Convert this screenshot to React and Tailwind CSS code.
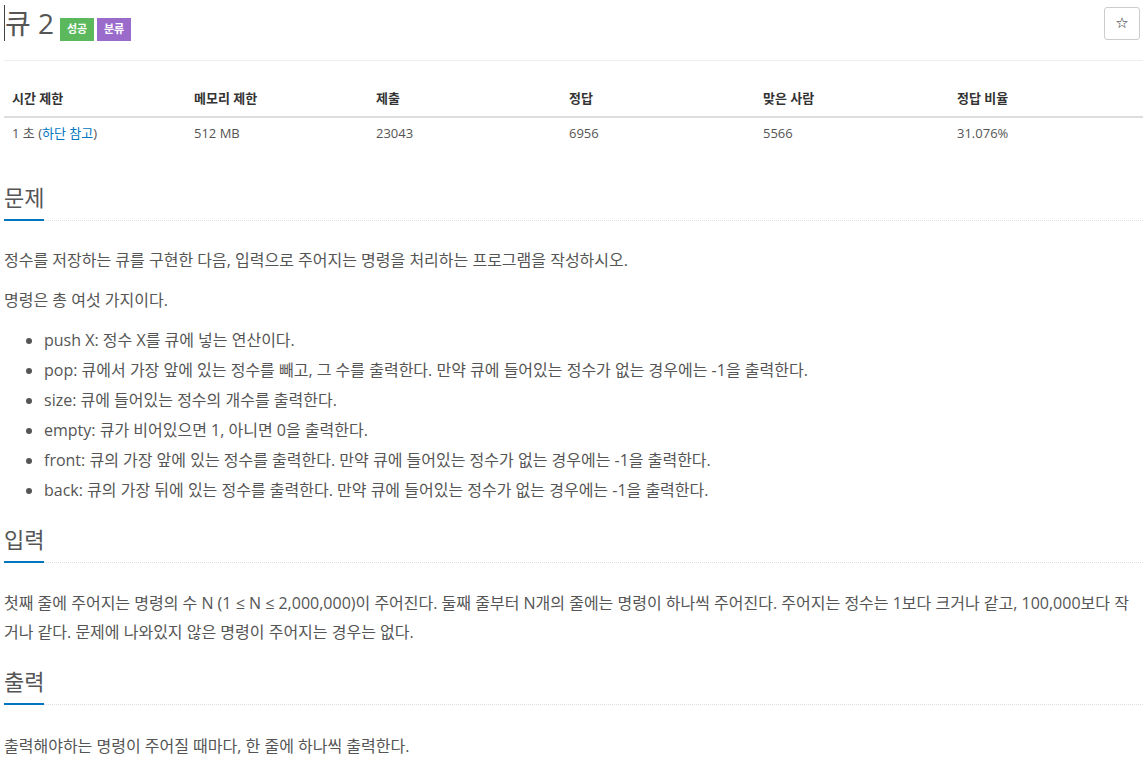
import React from 'react';

const stats = [
  { label: '시간 제한', value: null },
  { label: '메모리 제한', value: '512 MB' },
  { label: '제출', value: '23043' },
  { label: '정답', value: '6956' },
  { label: '맞은 사람', value: '5566' },
  { label: '정답 비율', value: '31.076%' },
];

const commands = [
  ['push X', ': 정수 X를 큐에 넣는 연산이다.'],
  ['pop', ': 큐에서 가장 앞에 있는 정수를 빼고, 그 수를 출력한다. 만약 큐에 들어있는 정수가 없는 경우에는 -1을 출력한다.'],
  ['size', ': 큐에 들어있는 정수의 개수를 출력한다.'],
  ['empty', ': 큐가 비어있으면 1, 아니면 0을 출력한다.'],
  ['front', ': 큐의 가장 앞에 있는 정수를 출력한다. 만약 큐에 들어있는 정수가 없는 경우에는 -1을 출력한다.'],
  ['back', ': 큐의 가장 뒤에 있는 정수를 출력한다. 만약 큐에 들어있는 정수가 없는 경우에는 -1을 출력한다.'],
];

const Section = ({ title, first, children }) => (
  <section className={first ? 'mt-[35px]' : 'mt-[20px]'}>
    <div className="border-b border-dotted border-[#dddddd]">
      <h2 className="inline-block -mb-px border-b-2 border-[#0076c0] pb-[8px] text-[22px] leading-[28px] font-normal text-[#555555]">
        {title}
      </h2>
    </div>
    <div className={first ? 'pt-[24px]' : 'pt-[26px]'}>{children}</div>
  </section>
);

const App = () => {
  return (
    <div
      className="min-h-screen bg-white pl-[4px] pr-[5px] text-[#555555]"
      style={{ fontFamily: '"Open Sans", "Noto Sans CJK KR", sans-serif' }}
    >
      {/* title row */}
      <div className="flex items-start justify-between pt-[5px]">
        <h1 className="flex items-start">
          <span className="inline-block h-[36px] w-px bg-[#444444]" />
          <span className="text-[28px] leading-[36px] font-normal text-[#555555]">큐 2</span>
          <span className="ml-[6px] mt-[13px] flex gap-[3px]">
            <span className="flex h-[23px] w-[34px] items-center justify-center bg-[#5cb85c] text-[11px] font-bold text-white">
              성공
            </span>
            <span className="flex h-[23px] w-[34px] items-center justify-center bg-[#9b6bcc] text-[11px] font-bold text-white">
              분류
            </span>
          </span>
        </h1>
        <button className="mt-[2px] flex h-[33px] w-[36px] items-center justify-center rounded-[3px] border border-[#cccccc] bg-white text-[15px] text-[#222222]">
          <span style={{ fontFamily: '"DejaVu Sans", sans-serif' }}>☆</span>
        </button>
      </div>

      <div className="-mr-[3px] mt-[19px] border-t border-[#eeeeee]" />

      {/* limits table */}
      <div className="-mr-[3px] mt-[19px] text-[13px] leading-[20px]">
        <div className="grid grid-cols-[182px_182px_193px_194px_194px_1fr] border-b-2 border-[#dddddd]">
          {stats.map((s) => (
            <div key={s.label} className="px-[8px] py-[8px] font-bold text-[#333333]">
              {s.label}
            </div>
          ))}
        </div>
        <div className="grid grid-cols-[182px_182px_193px_194px_194px_1fr]">
          {stats.map((s) => (
            <div key={s.label} className="px-[8px] py-[5px] text-[#555555]">
              {s.value === null ? (
                <>
                  1 초 (<span className="text-[#0076c0]">하단 참고</span>)
                </>
              ) : (
                s.value
              )}
            </div>
          ))}
        </div>
      </div>

      <div className="-mr-[3px] text-[16px] leading-[30px]">
        <Section title="문제" first>
          <p className="mb-[10px]">정수를 저장하는 큐를 구현한 다음, 입력으로 주어지는 명령을 처리하는 프로그램을 작성하시오.</p>
          <p className="mb-[10px]">명령은 총 여섯 가지이다.</p>
          <ul className="mb-[10px] list-disc pl-[40px]">
            {commands.map(([cmd, desc]) => (
              <li key={cmd}>
                {cmd}
                {desc}
              </li>
            ))}
          </ul>
        </Section>

        <Section title="입력">
          <p className="mb-[10px] leading-[29px]">
            첫째 줄에 주어지는 명령의 수 N (1 ≤ N ≤ 2,000,000)이 주어진다. 둘째 줄부터 N개의 줄에는 명령이 하나씩 주어진다. 주어지는 정수는 1보다 크거나 같고, 100,000보다 작거나 같다. 문제에 나와있지 않은 명령이 주어지는 경우는 없다.
          </p>
        </Section>

        <Section title="출력">
          <p className="mb-[10px]">출력해야하는 명령이 주어질 때마다, 한 줄에 하나씩 출력한다.</p>
        </Section>
      </div>
    </div>
  );
};

export default App;
